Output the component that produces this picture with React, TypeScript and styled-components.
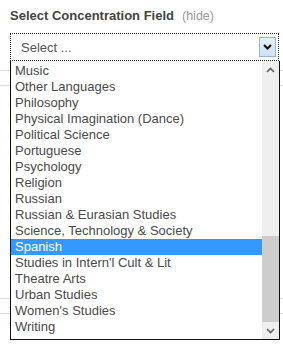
import styled, { createGlobalStyle } from 'styled-components'

const GlobalStyle = createGlobalStyle`
  html, body {
    margin: 0;
    padding: 0;
    background: #fff;
  }
  body {
    font-family: 'Liberation Sans', Arial, sans-serif;
  }
`

const Page = styled.div`
  position: relative;
  width: 283px;
  height: 346px;
  overflow: hidden;
  background: #fff;
`

const Field = styled.div`
  position: relative;
  padding: 8px 4px 0 10px;
`

const Heading = styled.div`
  display: flex;
  align-items: baseline;
  gap: 8px;
  height: 16px;
  line-height: 16px;
  margin-bottom: 9px;
`

const Title = styled.span`
  font-size: 13px;
  font-weight: 700;
  color: #444;
`

const Hide = styled.span`
  font-size: 12.5px;
  color: #999;
`

const SelectBox = styled.div`
  box-sizing: border-box;
  width: 269px;
  height: 28px;
  border: 1px dotted #222;
  display: flex;
  align-items: center;
  justify-content: space-between;
  padding: 0 2px 0 10px;
`

const Placeholder = styled.span`
  font-size: 13px;
  color: #555;
`

const ArrowButton = styled.span`
  box-sizing: border-box;
  width: 17px;
  height: 20px;
  display: flex;
  align-items: center;
  justify-content: center;
  background: linear-gradient(#e6f0fa, #cfe2f5);
  border: 1px solid #98b4d4;
`

const Backdrop = styled.div`
  position: relative;
`

const BackRow = styled.div<{ h: number }>`
  height: ${(p) => p.h}px;
  border-bottom: 1px solid #ddd;
`

const ListBox = styled.div`
  position: absolute;
  left: 10px;
  top: 61px;
  box-sizing: border-box;
  width: 270px;
  height: 279px;
  background: #fff;
  border: 1px solid #111;
  border-top: none;
  display: flex;
`

const Options = styled.ul`
  list-style: none;
  margin: 0;
  padding: 2px 0 0;
  flex: 1;
  overflow: hidden;
`

const Option = styled.li<{ selected?: boolean }>`
  height: 16px;
  line-height: 16px;
  padding-left: 4px;
  font-size: 13px;
  white-space: nowrap;
  color: ${(p) => (p.selected ? '#fff' : '#4a4a4a')};
  background: ${(p) => (p.selected ? '#3399ff' : 'transparent')};
`

const ScrollBar = styled.div`
  width: 17px;
  display: flex;
  flex-direction: column;
  background: #efefef;
`

const ScrollArrow = styled.div`
  height: 17px;
  display: flex;
  align-items: center;
  justify-content: center;
`

const Track = styled.div`
  flex: 1;
  display: flex;
  flex-direction: column;
`

const Thumb = styled.div`
  margin-top: auto;
  height: 86px;
  background: #cdcdcd;
`

const Chevron = ({ up, color, w }: { up?: boolean; color: string; w: number }) => (
  <svg width="9" height="6" viewBox="0 0 9 6">
    <path
      d={up ? 'M1 5 L4.5 1.5 L8 5' : 'M1 1 L4.5 4.5 L8 1'}
      fill="none"
      stroke={color}
      strokeWidth={w}
    />
  </svg>
)

const options = [
  'Music',
  'Other Languages',
  'Philosophy',
  'Physical Imagination (Dance)',
  'Political Science',
  'Portuguese',
  'Psychology',
  'Religion',
  'Russian',
  'Russian & Eurasian Studies',
  'Science, Technology & Society',
  'Spanish',
  "Studies in Intern'l Cult & Lit",
  'Theatre Arts',
  'Urban Studies',
  "Women's Studies",
  'Writing',
]

const App = () => {
  return (
    <Page>
      <GlobalStyle />
      <Field>
        <Heading>
          <Title>Select Concentration Field</Title>
          <Hide>(hide)</Hide>
        </Heading>
        <SelectBox>
          <Placeholder>Select ...</Placeholder>
          <ArrowButton>
            <Chevron color="#111" w={2} />
          </ArrowButton>
        </SelectBox>
      </Field>
      <Backdrop>
        <BackRow h={9} />
        <BackRow h={14} />
        <BackRow h={212} />
        <BackRow h={14} />
      </Backdrop>
      <ListBox>
        <Options>
          {options.map((o) => (
            <Option key={o} selected={o === 'Spanish'}>
              {o}
            </Option>
          ))}
        </Options>
        <ScrollBar>
          <ScrollArrow>
            <Chevron up color="#606060" w={1.6} />
          </ScrollArrow>
          <Track>
            <Thumb />
          </Track>
          <ScrollArrow>
            <Chevron color="#606060" w={1.6} />
          </ScrollArrow>
        </ScrollBar>
      </ListBox>
    </Page>
  )
}

export default App
